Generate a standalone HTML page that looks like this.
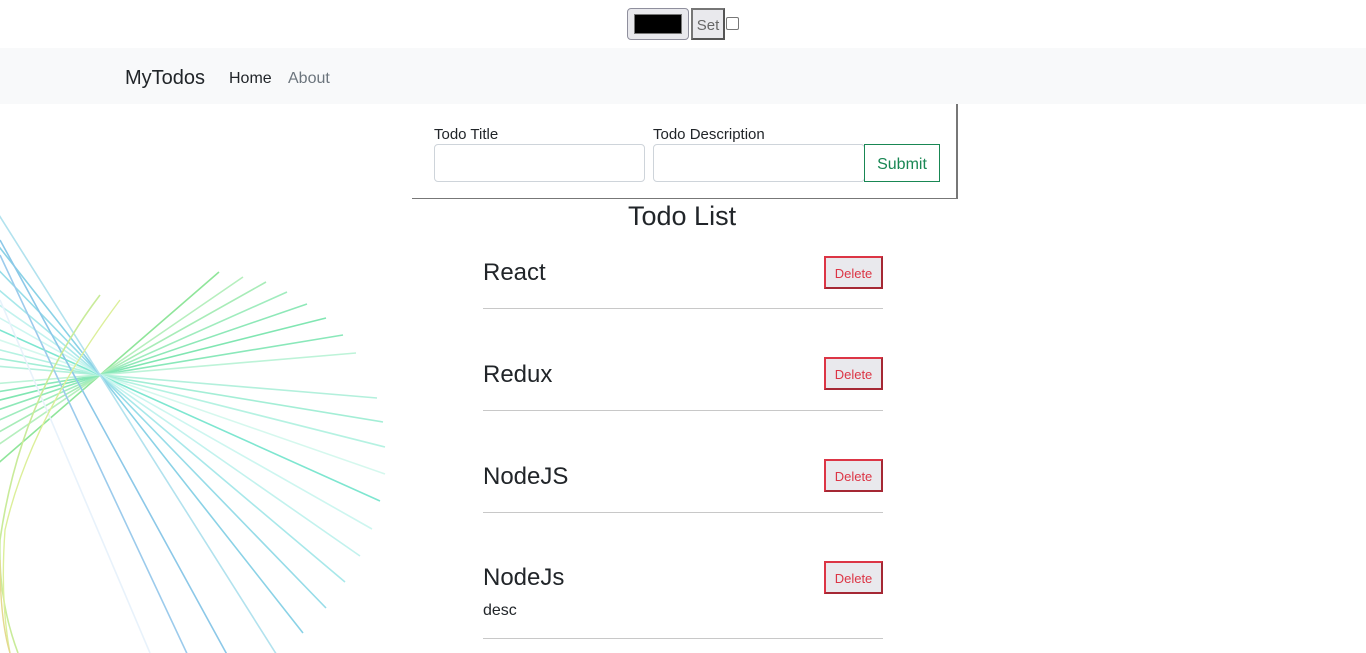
<!DOCTYPE html>
<html><head><meta charset="utf-8"><style>
html,body{margin:0;width:1366px;height:653px;overflow:hidden}
body{background:#fff;font-family:"Segoe UI","Liberation Sans",sans-serif;color:#212529;position:relative}
.abs{position:absolute}
.color{position:absolute;left:627px;top:8px;width:62px;height:32px;border:1px solid #8f8f9d;border-radius:4px;background:#e9e9ed;box-sizing:border-box}
.color div{position:absolute;left:6px;top:5px;width:46px;height:18px;background:#000;border:1px solid #777}
.set{position:absolute;left:691px;top:8px;width:34px;height:32px;box-sizing:border-box;border:2px solid #555;border-top-color:#767676;border-left-color:#767676;background:#e9e9ed;font-size:15px;color:#666;text-align:center;line-height:32px}
.chk{position:absolute;left:726px;top:17px;width:11px;height:11px;border:1.5px solid #777;border-radius:2px}
nav{position:absolute;left:0;top:48px;width:1366px;height:56px;background:#f8f9fa}
.brand{left:125px;top:67px;font-size:20px}
.nl{top:70px;font-size:16px}
label{position:absolute;font-size:15px;top:126px}
.inp{position:absolute;top:144px;height:38px;box-sizing:border-box;border:1px solid #ced4da;border-radius:4px;background:#fff}
.sub{position:absolute;left:864px;top:144px;width:76px;height:38px;box-sizing:border-box;border:1px solid #198754;color:#198754;font-size:16px;text-align:center;line-height:40px}
.t{position:absolute;left:483px;font-size:24px}
.del{position:absolute;left:824px;width:59px;height:33px;box-sizing:border-box;border:2px solid #dc3545;border-right-color:#a52834;border-bottom-color:#a52834;background:#e9e9ed;color:#dc3545;font-size:13px;text-align:center;line-height:31px}
.hr{position:absolute;left:483px;width:400px;height:1px;background:#c8c8c8}
</style></head><body>
<svg class="abs" style="left:0;top:0" width="400" height="653">
<g stroke-width="1.6" fill="none">
<line x1="219" y1="272" x2="-43" y2="499" stroke="#8fe59a"/>
<line x1="243" y1="277" x2="-72" y2="493" stroke="#b6efbe"/>
<line x1="266" y1="282" x2="-99" y2="487" stroke="#a8ecb8"/>
<line x1="287" y1="292" x2="-124" y2="475" stroke="#a0ecbe"/>
<line x1="307" y1="304" x2="-148" y2="460" stroke="#8ee8b8"/>
<line x1="326" y1="318" x2="-171" y2="443" stroke="#80e6b2"/>
<line x1="343" y1="335" x2="-192" y2="423" stroke="#8ae8ba"/>
<line x1="356" y1="353" x2="-207" y2="401" stroke="#bdf3d8"/>
<line x1="377" y1="398" x2="-232" y2="347" stroke="#b3f0dc"/>
<line x1="383" y1="422" x2="-240" y2="319" stroke="#a4eed6"/>
<line x1="385" y1="447" x2="-242" y2="289" stroke="#b5f2e2"/>
<line x1="385" y1="474" x2="-242" y2="256" stroke="#d5f8ee"/>
<line x1="380" y1="501" x2="-236" y2="224" stroke="#7ee6d0"/>
<line x1="372" y1="529" x2="-226" y2="190" stroke="#cdf6f0"/>
<line x1="360" y1="556" x2="-212" y2="158" stroke="#c2f2ee"/>
<line x1="345" y1="582" x2="-194" y2="127" stroke="#a8e8ea"/>
<line x1="326" y1="608" x2="-171" y2="95" stroke="#96dce8"/>
<line x1="303" y1="633" x2="-144" y2="65" stroke="#8ad2e6"/>
<line x1="280" y1="660" x2="-116" y2="33" stroke="#b2e2ee"/>
<line x1="230" y1="660" x2="0" y2="240" stroke="#8cc8e8"/>
<line x1="190" y1="660" x2="0" y2="255" stroke="#9ccbec"/>
<line x1="150" y1="653" x2="0" y2="300" stroke="#e8f2fb"/>
<path d="M100 295 Q20 400 0 540 Q-2 600 18 653" stroke="#c9eb9a" stroke-width="1.6"/>
<path d="M120 300 Q30 420 5 530 Q0 600 10 653" stroke="#dcef9a" stroke-width="1.4"/>
<path d="M0 560 Q0 620 10 653" stroke="#e5d890" stroke-width="1.4"/>
</g></svg>
<div class="color"><div></div></div>
<div class="set">Set</div>
<div class="chk"></div>
<nav></nav>
<div class="abs brand">MyTodos</div>
<div class="abs nl" style="left:229px">Home</div>
<div class="abs nl" style="left:288px;color:#6c757d">About</div>
<div class="abs" style="left:412px;top:198px;width:545px;height:1px;background:#777"></div>
<div class="abs" style="left:956px;top:104px;width:1.5px;height:95px;background:#777"></div>
<label style="left:434px">Todo Title</label>
<label style="left:653px">Todo Description</label>
<div class="inp" style="left:434px;width:211px"></div>
<div class="inp" style="left:653px;width:212px"></div>
<div class="sub">Submit</div>
<div class="abs" style="left:628px;top:201px;font-size:27px">Todo List</div>
<div class="t" style="top:259px">React</div><div class="del" style="top:256px">Delete</div><div class="hr" style="top:308px"></div>
<div class="t" style="top:361px">Redux</div><div class="del" style="top:357px">Delete</div><div class="hr" style="top:410px"></div>
<div class="t" style="top:463px">NodeJS</div><div class="del" style="top:459px">Delete</div><div class="hr" style="top:512px"></div>
<div class="t" style="top:564px">NodeJs</div><div class="del" style="top:561px">Delete</div>
<div class="abs" style="left:483px;top:602px;font-size:16px">desc</div>
<div class="hr" style="top:638px"></div>
</body></html>
